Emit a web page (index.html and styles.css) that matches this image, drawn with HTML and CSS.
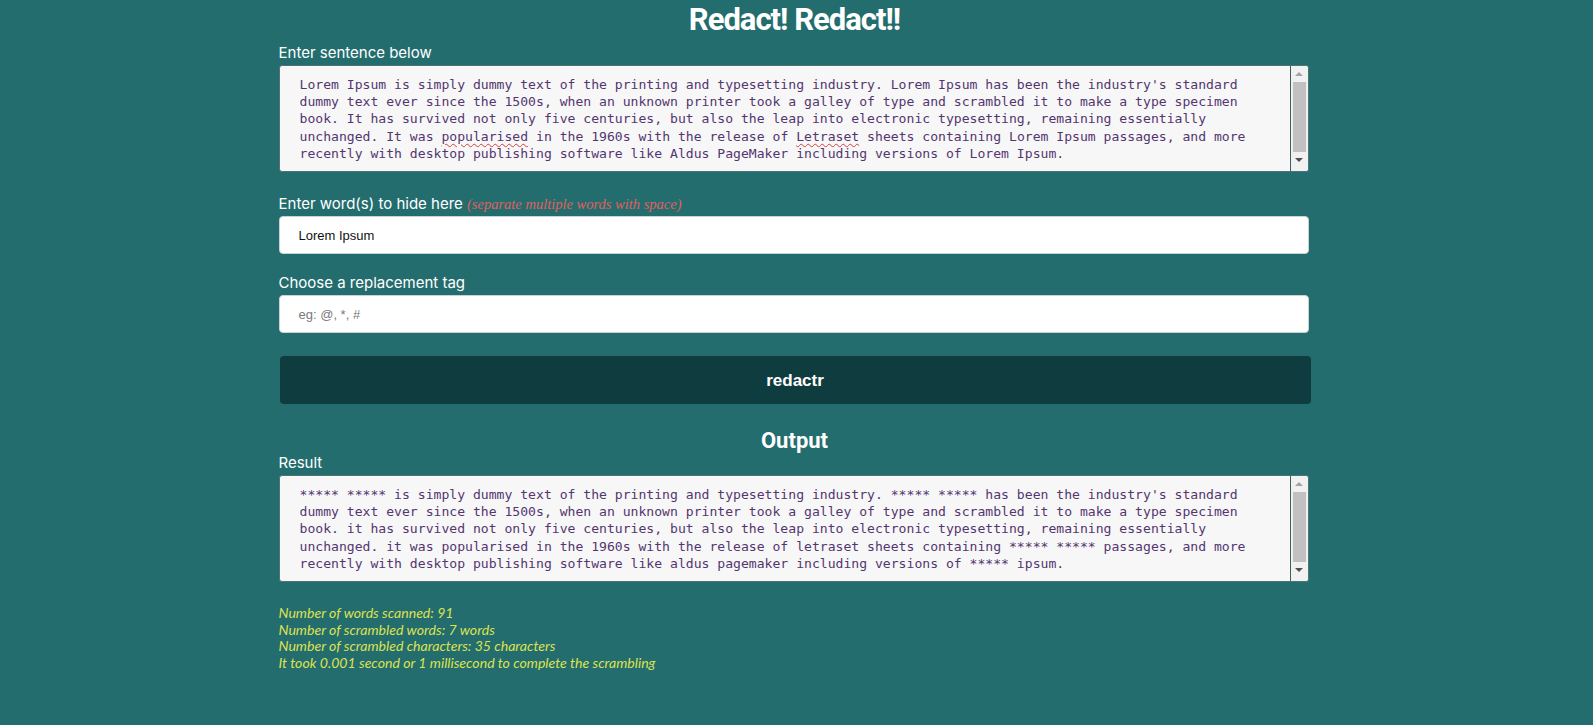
FILE: index.html
```html
<!DOCTYPE html>
<html lang="en">
<head>
<meta charset="utf-8">
<title>Redact! Redact!!</title>
<link rel="stylesheet" href="styles.css">
</head>
<body>
<main class="page">
  <h1 class="title">Redact! Redact!!</h1>

  <div class="field">
    <label class="label">Enter sentence below</label>
    <div class="textbox">
      <div class="textbox-text">Lorem Ipsum is simply dummy text of the printing and typesetting industry. Lorem Ipsum has been the industry's standard<br>dummy text ever since the 1500s, when an unknown printer took a galley of type and scrambled it to make a type specimen<br>book. It has survived not only five centuries, but also the leap into electronic typesetting, remaining essentially<br>unchanged. It was <span class="typo">popularised</span> in the 1960s with the release of <span class="typo">Letraset</span> sheets containing Lorem Ipsum passages, and more<br>recently with desktop publishing software like Aldus PageMaker including versions of Lorem Ipsum.</div>
      <div class="scrollbar">
        <span class="arrow arrow-up"></span>
        <span class="thumb"></span>
        <span class="arrow arrow-down"></span>
      </div>
    </div>
  </div>

  <div class="field field-words">
    <label class="label">Enter word(s) to hide here <em class="hint">(separate multiple words with space)</em></label>
    <div class="input">Lorem Ipsum</div>
  </div>

  <div class="field field-tag">
    <label class="label">Choose a replacement tag</label>
    <div class="input placeholder">eg: @, *, #</div>
  </div>

  <button class="btn">redactr</button>

  <h2 class="subtitle">Output</h2>

  <div class="field field-result">
    <label class="label">Result</label>
    <div class="textbox">
      <div class="textbox-text">***** ***** is simply dummy text of the printing and typesetting industry. ***** ***** has been the industry's standard<br>dummy text ever since the 1500s, when an unknown printer took a galley of type and scrambled it to make a type specimen<br>book. it has survived not only five centuries, but also the leap into electronic typesetting, remaining essentially<br>unchanged. it was popularised in the 1960s with the release of letraset sheets containing ***** ***** passages, and more<br>recently with desktop publishing software like aldus pagemaker including versions of ***** ipsum.</div>
      <div class="scrollbar">
        <span class="arrow arrow-up"></span>
        <span class="thumb"></span>
        <span class="arrow arrow-down"></span>
      </div>
    </div>
  </div>

  <div class="stats">
    <p>Number of words scanned: 91</p>
    <p>Number of scrambled words: 7 words</p>
    <p>Number of scrambled characters: 35 characters</p>
    <p>It took 0.001 second or 1 millisecond to complete the scrambling</p>
  </div>
</main>
</body>
</html>
```

FILE: styles.css
```css
html, body {
  margin: 0;
  padding: 0;
}

body {
  background: #236d6e;
  min-height: 725px;
  font-family: Inter, "Open Sans", sans-serif;
}

.page {
  width: 1032px;
  margin-left: calc(50% - 518px);
  display: flex;
  flex-direction: column;
}

.title {
  margin: 3px 0 0;
  font-family: Roboto, sans-serif;
  font-weight: 700;
  font-size: 31px;
  line-height: 33px;
  color: #ffffff;
  text-align: center;
  letter-spacing: -1px;
}

.field {
  display: flex;
  flex-direction: column;
  width: 1030px;
}

.label {
  font-family: Inter, sans-serif;
  font-size: 15px;
  line-height: 20px;
  color: #ffffff;
  margin-top: 7px;
  margin-bottom: 2px;
}

.hint {
  font-family: "Liberation Serif", "Times New Roman", serif;
  font-style: italic;
  font-size: 14.5px;
  color: #e06060;
}

.textbox {
  height: 107px;
  box-sizing: border-box;
  border: 1px solid #4f7374;
  border-radius: 3px;
  background: #f7f7f7;
  display: flex;
}

.textbox-text {
  flex: 1;
  padding: 10px 0 0 20px;
  font-family: "DejaVu Sans Mono", "Liberation Mono", monospace;
  font-size: 13.1px;
  line-height: 17.2px;
  color: #53366f;
  white-space: nowrap;
  overflow: hidden;
}

.typo {
  text-decoration: underline wavy #d04040;
  text-decoration-thickness: 1px;
  text-underline-offset: 2px;
}

.scrollbar {
  width: 17px;
  border-left: 1px solid #3f5f60;
  background: #f1f1f1;
  display: flex;
  flex-direction: column;
  align-items: center;
  border-radius: 0 3px 3px 0;
}

.arrow {
  width: 0;
  height: 0;
  border-left: 4px solid transparent;
  border-right: 4px solid transparent;
}

.arrow-up {
  margin-top: 6px;
  border-bottom: 4px solid #a3a3a3;
}

.arrow-down {
  margin-top: 6px;
  border-top: 4px solid #505050;
}

.thumb {
  margin-top: 6px;
  width: 13px;
  height: 70px;
  background: #c1c1c1;
}

.input {
  height: 38px;
  box-sizing: border-box;
  background: #ffffff;
  border: 1px solid #c9d3d3;
  border-radius: 4px;
  padding: 0 19px;
  display: flex;
  align-items: center;
  font-family: "Liberation Sans", Arial, sans-serif;
  font-size: 13px;
  color: #111111;
}

.field-words .label {
  margin-top: 22px;
}

.field-tag .label {
  margin-top: 19px;
}

.placeholder {
  color: #7a7a7a;
}

.btn {
  margin: 23px 0 0 1px;
  width: 1031px;
  height: 48px;
  padding-top: 3px;
  border: none;
  border-radius: 4px;
  background: #0f3c3e;
  color: #ffffff;
  font-family: "Liberation Sans", Arial, sans-serif;
  font-weight: 700;
  font-size: 17px;
}

.subtitle {
  margin: 25px 0 0;
  font-family: Roboto, sans-serif;
  font-weight: 700;
  font-size: 22px;
  line-height: 24px;
  color: #ffffff;
  text-align: center;
}

.field-result .label {
  margin-top: 0;
}

.stats {
  margin-top: 23px;
  font-family: Lato, sans-serif;
  font-style: italic;
  font-size: 14.1px;
  line-height: 16.7px;
  color: #dde24e;
}

.stats p {
  margin: 0;
}
```
